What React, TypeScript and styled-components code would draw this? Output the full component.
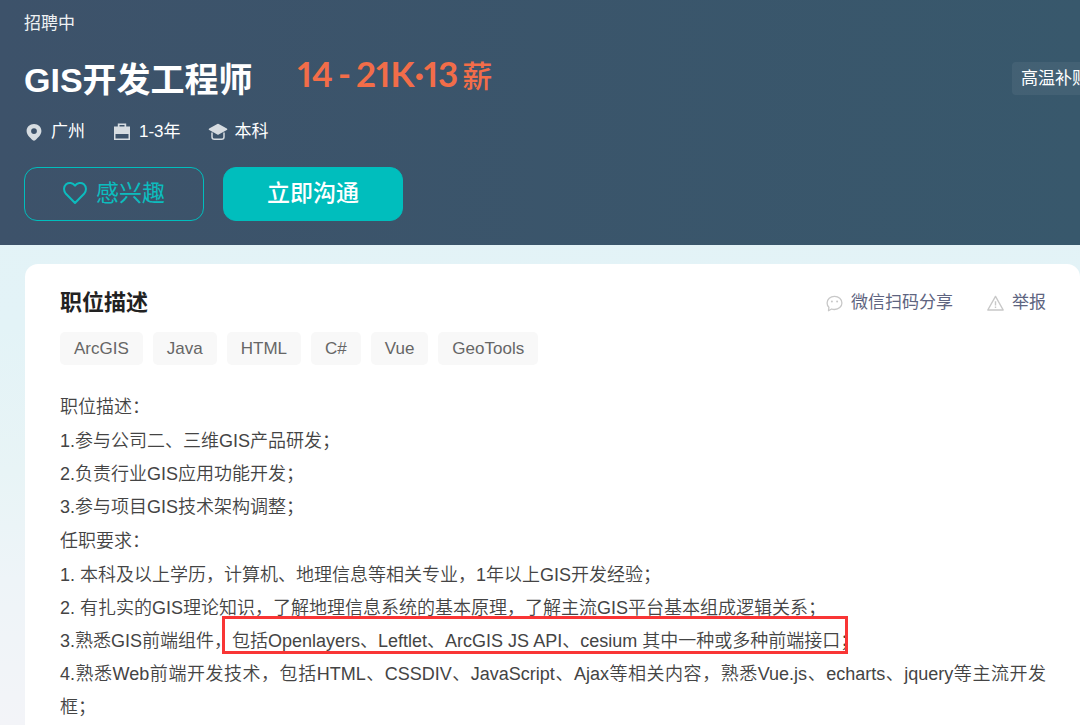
import React from "react";
import styled, { createGlobalStyle } from "styled-components";

const GlobalStyle = createGlobalStyle`
  *, *::before, *::after { box-sizing: border-box; }
  body {
    margin: 0;
    font-family: "Liberation Sans", "Noto Sans CJK SC", sans-serif;
    color: #444;
    background: #e3f2f7;
  }
  h1, h2, h3, p, ul, ol { margin: 0; padding: 0; }
  ul, ol { list-style: none; }
  button { font-family: inherit; cursor: pointer; }
`;

const Page = styled.div`
  min-height: 100vh;
  display: flex;
  flex-direction: column;
  overflow: hidden;
  background: linear-gradient(180deg, #e3f2f6 0%, #e3f3f7 45%, #e8f4f6 65%, #eef4f8 80%, #f3f4f8 100%);
`;

const Banner = styled.header`
  display: flex;
  align-items: flex-start;
  justify-content: space-between;
  padding: 11px 0 24px 24px;
  background: linear-gradient(90deg, #3d526a, #38586c);
  color: #fff;
`;

const Status = styled.p`
  font-size: 17px;
  line-height: 26px;
  color: #eef1f3;
`;

const TitleRow = styled.div`
  display: flex;
  align-items: flex-start;
  gap: 45px;
  margin-top: 18px;
`;

const JobTitle = styled.h1`
  font-size: 34px;
  line-height: 50px;
  font-weight: 700;
`;

const Salary = styled.span`
  font-family: Lato, "Noto Sans CJK SC", sans-serif;
  font-size: 35px;
  line-height: 37px;
  font-weight: 700;
  font-variant-numeric: proportional-nums;
  color: #f26d49;
`;

const SalaryDash = styled.span`
  margin: 0 5px;
`;

const SalaryUnit = styled.span`
  font-size: 30px;
  font-weight: 500;
  margin-left: 4px;
`;

const MetaList = styled.ul`
  display: flex;
  gap: 27px;
  margin-top: 14px;
`;

const MetaItem = styled.li`
  display: flex;
  align-items: center;
  gap: 7px;
  font-size: 17px;
  line-height: 26px;

  svg { width: 20px; height: 20px; fill: #d6dce1; }
`;

const Actions = styled.div`
  display: flex;
  gap: 19px;
  margin-top: 22px;
`;

const ActionButton = styled.button<{ $solid?: boolean }>`
  display: flex;
  align-items: center;
  justify-content: center;
  gap: 9px;
  width: 180px;
  height: 54px;
  padding: 0 0 2px;
  border: 1px solid #00bebd;
  border-radius: 13px;
  font-size: 23px;
  line-height: 34px;
  font-weight: ${(p) => (p.$solid ? 500 : 400)};
  color: ${(p) => (p.$solid ? "#fff" : "#0cbcbe")};
  background: ${(p) => (p.$solid ? "#00bebd" : "transparent")};

  svg { width: 24px; height: 24px; }
`;

const Perks = styled.ul`
  display: flex;
  width: 68px;
  margin-top: 51px;
  overflow: hidden;
`;

const Perk = styled.li`
  flex: none;
  padding: 0 9px;
  border-radius: 4px;
  font-size: 17px;
  line-height: 33px;
  white-space: nowrap;
  background: rgba(255, 255, 255, 0.06);
`;

const Card = styled.main`
  flex: 1;
  margin: 19px 0 0 25px;
  padding: 21px 34px 0 35px;
  border-radius: 13px 13px 0 0;
  background: #fff;
`;

const CardHeader = styled.div`
  display: flex;
  align-items: center;
  justify-content: space-between;
`;

const CardTitle = styled.h2`
  font-size: 22px;
  line-height: 36px;
  font-weight: 700;
  color: #222;
`;

const CardLinks = styled.nav`
  display: flex;
  gap: 34px;
`;

const CardLink = styled.a`
  display: flex;
  align-items: center;
  gap: 8px;
  font-size: 17px;
  line-height: 26px;
  color: #5e6480;
  text-decoration: none;

  svg { width: 17px; height: 17px; color: #c8c8c8; }
`;

const Tags = styled.ul`
  display: flex;
  flex-wrap: wrap;
  gap: 10px;
  margin-top: 11px;
`;

const Tag = styled.li`
  padding: 0 14px;
  border-radius: 5px;
  font-size: 17px;
  line-height: 33px;
  color: #666;
  background: #f8f8f8;
`;

const Description = styled.section`
  margin-top: 26px;
  font-size: 18px;
  line-height: 33px;
  font-weight: 350;
  color: #444;
  text-align: justify;
`;

const SectionName = styled.h3`
  font-size: 18px;
  line-height: 33px;
  font-weight: 350;
  margin: 1px 0;
`;

const Highlight = styled.mark`
  position: relative;
  color: inherit;
  background: none;

  &::after {
    content: "";
    position: absolute;
    inset: -15px 10px -3px -10px;
    border: 3px solid #f93535;
  }
`;

const PinIcon = () => (
  <svg viewBox="0 0 20 20" aria-hidden="true">
    <path fillRule="evenodd" d="M10 2c4.300 0 7.400 3 7.400 7.100 0 3.700-3 6.400-6.200 9.200-.7.600-1.700.600-2.400 0C5.600 15.500 2.600 12.800 2.600 9.100 2.600 5 5.700 2 10 2Zm0 4.200a2.900 2.900 0 1 0 0 5.800 2.900 2.900 0 0 0 0-5.800Z" />
  </svg>
);

const BagIcon = () => (
  <svg viewBox="0 0 20 20" aria-hidden="true">
    <path fillRule="evenodd" d="M5.800 1.500h8.400V4.500H18V11H2V4.500h3.800v-3Zm1.700 1.500v1.500h5V3h-5Z" />
    <path fillRule="evenodd" d="M2 11h16v7H2v-7Zm1.500 1v4.500h13V12h-13Z" />
  </svg>
);

const CapIcon = () => (
  <svg viewBox="0 0 20 20" aria-hidden="true">
    <path d="M9.300 2a1.600 1.600 0 0 1 1.400 0l8.100 4.400c.7.400.7 1.300 0 1.700l-8.100 4.400a1.600 1.600 0 0 1-1.400 0L1.200 8.100c-.7-.4-.7-1.300 0-1.700L9.300 2Z" />
    <path d="M4 10.500v4.400c0 1.400 1 2.300 2.400 2.300h7.200c1.400 0 2.400-.9 2.400-2.300v-4.400" fill="none" stroke="#d6dce1" strokeWidth="1.500" />
  </svg>
);

const HeartIcon = () => (
  <svg viewBox="0 0 24 24" fill="none" stroke="currentColor" strokeWidth="2" strokeLinejoin="round" aria-hidden="true">
    <path d="M12 22 2.900 12.800C.3 9.800.5 5.600 3.100 3.300 5.800 1.200 9.700 1.700 12 4.700c2.300-3 6.200-3.500 8.900-1.400 2.600 2.300 2.800 6.500.2 9.500L12 22Z" />
  </svg>
);

const ChatIcon = () => (
  <svg viewBox="0 0 17 17" fill="none" stroke="currentColor" strokeWidth="1.300" strokeLinejoin="round" aria-hidden="true">
    <path d="M8.500 1.300c4.200 0 7.400 2.900 7.400 6.600s-3.200 6.600-7.400 6.600c-1 0-2-.1-2.900-.5L2.500 15.700l.4-3.400C1.700 11.200 1.100 9.600 1.100 7.900c0-3.700 3.200-6.600 7.400-6.600Z" />
    <circle cx="5.900" cy="6.500" r="1" fill="currentColor" stroke="none" />
    <circle cx="11.100" cy="6.500" r="1" fill="currentColor" stroke="none" />
  </svg>
);

const WarnIcon = () => (
  <svg viewBox="0 0 17 17" fill="none" stroke="currentColor" strokeWidth="1.400" strokeLinejoin="round" aria-hidden="true">
    <path d="M8.500 1.400 16.200 15H.8L8.500 1.400Z" />
    <path d="M8.500 6.200v4.200M8.500 11.600v1.400" />
  </svg>
);

const skills = ["ArcGIS", "Java", "HTML", "C#", "Vue", "GeoTools"];

export default function App() {
  return (
    <>
      <GlobalStyle />
      <Page>
        <Banner>
          <div>
            <Status>招聘中</Status>
            <TitleRow>
              <JobTitle>GIS开发工程师</JobTitle>
              <Salary>14<SalaryDash>-</SalaryDash>21K·13<SalaryUnit>薪</SalaryUnit></Salary>
            </TitleRow>
            <MetaList>
              <MetaItem><PinIcon />广州</MetaItem>
              <MetaItem><BagIcon />1-3年</MetaItem>
              <MetaItem><CapIcon />本科</MetaItem>
            </MetaList>
            <Actions>
              <ActionButton type="button"><HeartIcon />感兴趣</ActionButton>
              <ActionButton type="button" $solid>立即沟通</ActionButton>
            </Actions>
          </div>
          <Perks>
            <Perk>高温补贴</Perk>
          </Perks>
        </Banner>
        <Card>
          <CardHeader>
            <CardTitle>职位描述</CardTitle>
            <CardLinks>
              <CardLink href="#share"><ChatIcon />微信扫码分享</CardLink>
              <CardLink href="#report"><WarnIcon />举报</CardLink>
            </CardLinks>
          </CardHeader>
          <Tags>
            {skills.map((skill) => <Tag key={skill}>{skill}</Tag>)}
          </Tags>
          <Description>
            <SectionName>职位描述：</SectionName>
            <p>1.参与公司二、三维GIS产品研发；</p>
            <p>2.负责行业GIS应用功能开发；</p>
            <p>3.参与项目GIS技术架构调整；</p>
            <SectionName>任职要求：</SectionName>
            <p>1. 本科及以上学历，计算机、地理信息等相关专业，1年以上GIS开发经验；</p>
            <p>2. 有扎实的GIS理论知识，了解地理信息系统的基本原理，了解主流GIS平台基本组成逻辑关系；</p>
            <p>3.熟悉GIS前端组件，<Highlight>包括Openlayers、Leftlet、ArcGIS JS API、cesium 其中一种或多种前端接口；</Highlight></p>
            <p>4.熟悉Web前端开发技术，包括HTML、CSSDIV、JavaScript、Ajax等相关内容，熟悉Vue.js、echarts、jquery等主流开发框；</p>
          </Description>
        </Card>
      </Page>
    </>
  );
}
